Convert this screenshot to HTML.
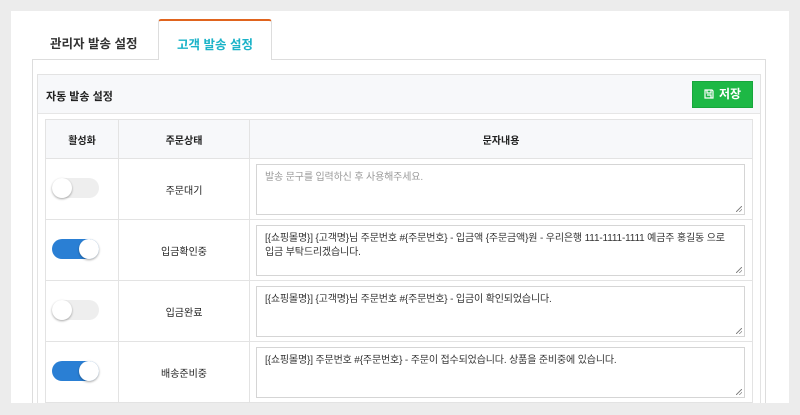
<!DOCTYPE html>
<html><head><meta charset="utf-8"><style>
*{box-sizing:border-box;margin:0;padding:0}
body{width:800px;height:415px;background:#ececec;font-family:"Liberation Sans","Noto Sans CJK KR",sans-serif;position:relative;overflow:hidden;color:#222}
.a{position:absolute}
.panel{left:11px;top:11px;width:778px;height:392px;background:#fff}
.tab1{left:50px;top:33px;font-size:12.5px;font-weight:bold;color:#333}
.tab2{left:158px;top:19px;width:114px;height:41px;background:#fff;border:1px solid #ddd;border-bottom:none;border-top:2px solid #e0641e;border-radius:3px 3px 0 0;color:#1bb3c8;font-size:12.5px;font-weight:bold;text-align:center;padding-top:13px;z-index:2}
.content{left:32px;top:59px;width:734px;height:344px;border:1px solid #ddd;border-bottom:none;background:#fff}
.inner{left:37px;top:74px;width:724px;height:329px;border:1px solid #e3e3e3;border-bottom:none;background:#fff}
.hdr{left:38px;top:75px;width:722px;height:39px;background:#f7f8fa;border-bottom:1px solid #e6e6e6}
.hdr span{position:absolute;left:8px;top:13px;font-size:11px;font-weight:bold;color:#222}
.btn{left:692px;top:81px;width:61px;height:27px;background:#1db845;border:1px solid #17a63c;color:#fff;font-size:12px;font-weight:bold;text-align:center;line-height:25px}
table{position:absolute;left:45px;top:119px;width:708px;border-collapse:collapse;font-size:10px}
td,th{border:1px solid #e3e3e3;text-align:center}
th{height:39px;background:#f7f8fa;font-weight:bold;font-size:10px}
td{height:61px;background:#fff}
.ta{width:489px;height:51px;border:1px solid #d5d5d5;margin-left:6px;text-align:left;padding:6px 8px;font-size:10px;letter-spacing:-0.15px;line-height:14px;color:#333;position:relative}
.ta.ph{color:#999}
.ta:after{content:"";position:absolute;right:2px;bottom:2px;width:6px;height:6px;background:linear-gradient(135deg,transparent 45%,#888 45%,#888 55%,transparent 55%,transparent 72%,#888 72%,#888 82%,transparent 82%)}
.tg{width:47px;height:20px;border-radius:10px;background:#eee;position:relative;margin-left:6px;margin-top:-2px}
.tg:after{content:"";position:absolute;left:0;top:0;width:20px;height:20px;border-radius:50%;background:#fff;box-shadow:0 1px 2px rgba(0,0,0,.35)}
.tg.on{background:#2a7fd4}
.tg.on:after{left:27px}
</style></head><body>
<div class="a panel"></div>
<div class="a tab1">관리자 발송 설정</div>
<div class="a content"></div>
<div class="a tab2">고객 발송 설정</div>
<div class="a inner"></div>
<div class="a hdr"><span>자동 발송 설정</span></div>
<div class="a btn"><svg width="10" height="10" viewBox="0 0 10 10" style="vertical-align:-1px;margin-right:5px"><path d="M1 1h7l1 1v7H1z M3 1v3h4V1 M3 6h4v3" fill="none" stroke="#fff" stroke-width="1.2"/></svg>저장</div>
<table>
<tr><th style="width:73px">활성화</th><th style="width:131px">주문상태</th><th>문자내용</th></tr>
<tr><td><div class="tg"></div></td><td>주문대기</td><td><div class="ta ph">발송 문구를 입력하신 후 사용해주세요.</div></td></tr>
<tr><td><div class="tg on"></div></td><td>입금확인중</td><td><div class="ta">[{쇼핑몰명}] {고객명}님 주문번호 #{주문번호} - 입금액 {주문금액}원 - 우리은행 111-1111-1111 예금주 홍길동 으로<br>입금 부탁드리겠습니다.</div></td></tr>
<tr><td><div class="tg"></div></td><td>입금완료</td><td><div class="ta">[{쇼핑몰명}] {고객명}님 주문번호 #{주문번호} - 입금이 확인되었습니다.</div></td></tr>
<tr><td><div class="tg on"></div></td><td>배송준비중</td><td><div class="ta">[{쇼핑몰명}] 주문번호 #{주문번호} - 주문이 접수되었습니다. 상품을 준비중에 있습니다.</div></td></tr>
</table>
<div class="a" style="left:0;top:403px;width:800px;height:12px;background:#ececec;z-index:5"></div>
</body></html>
